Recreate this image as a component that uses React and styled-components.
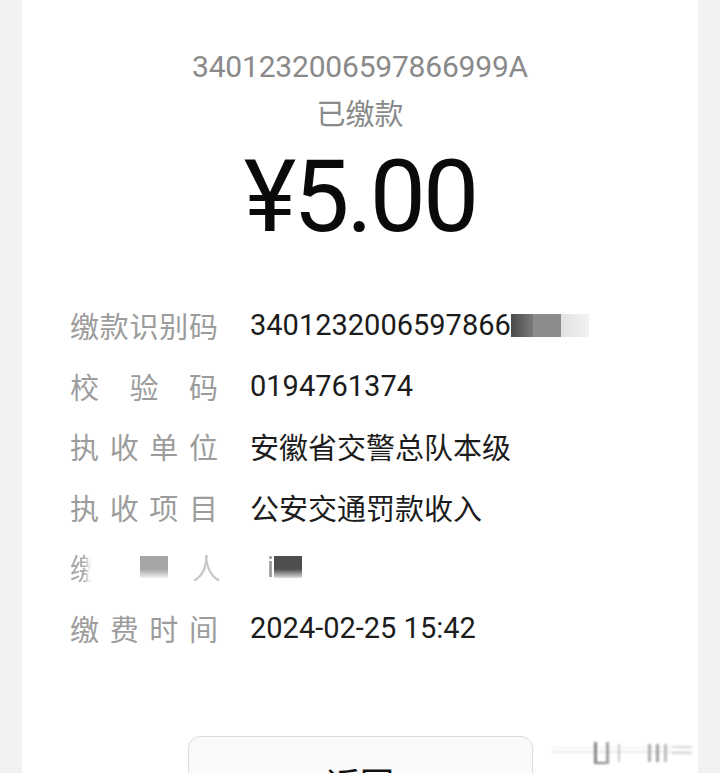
import React from 'react';
import styled, { createGlobalStyle } from 'styled-components';

const GlobalStyle = createGlobalStyle`
  html, body {
    margin: 0;
    padding: 0;
    background: #f2f2f2;
  }
  body {
    font-family: Roboto, "Noto Sans CJK SC", sans-serif;
  }
`

const Card = styled.div`
  margin: 0 22px;
  height: 773px;
  overflow: hidden;
  background: #fff;
  padding-top: 47px;
  box-sizing: border-box;
`

const Code = styled.div`
  text-align: center;
  font-size: 30px;
  line-height: 40px;
  color: #8a8a8a;
  letter-spacing: -0.2px;
`

const Status = styled.div`
  margin-top: 8px;
  text-align: center;
  font-size: 29px;
  line-height: 40px;
  color: #8a8a8a;
`

const Amount = styled.div`
  margin-top: 12px;
  text-align: center;
  font-size: 100px;
  line-height: 100px;
  color: #0a0a0a;
  letter-spacing: -3px;
`

const Rows = styled.div`
  margin-top: 48px;
  padding-left: 48px;
  display: flex;
  flex-direction: column;
`

const Row = styled.div`
  display: flex;
  align-items: center;
  height: 60.5px;
  gap: 32px;
`

const Label = styled.div`
  width: 148px;
  display: flex;
  justify-content: space-between;
  font-size: 29px;
  color: #9c9c9c;
  flex-shrink: 0;
`

const Value = styled.div`
  display: flex;
  align-items: center;
  font-size: 29px;
  color: #1c1c1c;
  white-space: nowrap;
`

const Mosaic = styled.span`
  display: inline-block;
  width: ${p => p.$w}px;
  height: ${p => p.$h || 23}px;
  margin-left: ${p => p.$ml || 0}px;
  background: ${p => p.$bg};
  filter: blur(0.6px);
`

const Faded = styled.span`
  color: ${p => p.$color || '#c8c8c8'};
  filter: blur(${p => p.$blur || 0.6}px);
  margin-left: ${p => p.$ml || 0}px;
  font-size: 29px;
`

const Clipped = styled.span`
  display: inline-block;
  width: 22px;
  overflow: hidden;
  color: #a8a8a8;
  -webkit-mask-image: linear-gradient(90deg, #000 60%, transparent);
  mask-image: linear-gradient(90deg, #000 60%, transparent);
`

const Footer = styled.div`
  margin-top: 78px;
  display: flex;
  justify-content: center;
  position: relative;
`

const BackButton = styled.button`
  width: 345px;
  height: 88px;
  border: 1px solid #dcdcdc;
  border-radius: 12px;
  background: #fafafa;
  font-family: "Noto Sans CJK SC", sans-serif;
  font-size: 34px;
  color: #111;
  padding-top: 6px;
`

const Smudge = styled.svg`
  position: absolute;
  left: 530px;
  top: 4px;
  filter: blur(1.2px);
  opacity: 0.8;
`

function Labelled({ text }) {
  return (
    <Label>
      {text.split('').map((c, i) => <span key={i}>{c}</span>)}
    </Label>
  )
}

const rows = [
  { label: '校验码', value: '0194761374' },
  { label: '执收单位', value: '安徽省交警总队本级' },
  { label: '执收项目', value: '公安交通罚款收入' },
]

export default function App() {
  return (
    <>
      <GlobalStyle />
      <Card>
        <Code>3401232006597866999A</Code>
        <Status>已缴款</Status>
        <Amount>¥5.00</Amount>
        <Rows>
          <Row>
            <Labelled text="缴款识别码" />
            <Value>
              3401232006597866
              <Mosaic $w={22} $bg="linear-gradient(90deg, #4a4a4a, #7a7a7a)" />
              <Mosaic $w={28} $bg="#8c8c8c" />
              <Mosaic $w={28} $bg="linear-gradient(90deg, #e2e2e2, #f2f2f2)" />
            </Value>
          </Row>
          {rows.map(r => (
            <Row key={r.label}>
              <Labelled text={r.label} />
              <Value>{r.value}</Value>
            </Row>
          ))}
          <Row>
            <Label>
              <Clipped>缴</Clipped>
            </Label>
            <Value>
              <Mosaic $w={28} $h={22} $ml={-110} $bg="linear-gradient(180deg, #a6a6a6 60%, #f2f2f2)" />
              <Faded $ml={24}>人</Faded>
              <Faded $ml={46} $color="#999">i</Faded>
              <Mosaic $w={28} $h={22} $bg="linear-gradient(180deg, #4e4e4e 60%, #dcdcdc)" />
            </Value>
          </Row>
          <Row>
            <Labelled text="缴费时间" />
            <Value>2024-02-25 15:42</Value>
          </Row>
        </Rows>
        <Footer>
          <BackButton>返回</BackButton>
          <Smudge width="150" height="26" viewBox="0 0 150 26">
            <rect x="0" y="11" width="140" height="2" fill="#e4e4e4" />
            <rect x="0" y="7" width="140" height="1" fill="#eeeeee" />
            <rect x="42" y="2" width="3" height="22" fill="#666" />
            <rect x="42" y="22" width="12" height="2" fill="#666" />
            <rect x="54" y="2" width="3" height="22" fill="#888" />
            <rect x="66" y="4" width="2" height="18" fill="#bbb" />
            <rect x="96" y="4" width="3" height="18" fill="#999" />
            <rect x="104" y="4" width="3" height="18" fill="#888" />
            <rect x="112" y="4" width="3" height="18" fill="#aaa" />
            <rect x="120" y="6" width="20" height="2" fill="#ccc" />
            <rect x="120" y="12" width="20" height="2" fill="#ccc" />
          </Smudge>
        </Footer>
      </Card>
    </>
  )
}
